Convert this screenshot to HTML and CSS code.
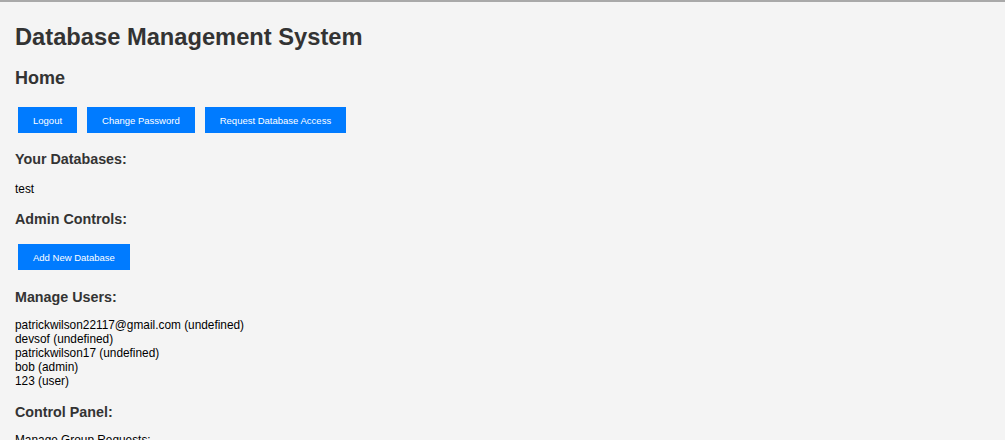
FILE: index.html
```html
<!DOCTYPE html>
<html lang="en">
<head>
<meta charset="utf-8">
<title>Database Management System</title>
<link rel="stylesheet" href="styles.css">
</head>
<body>
  <h1 class="title">Database Management System</h1>
  <h2 class="page-title">Home</h2>
  <div class="btn-row btn-row-top">
    <button class="btn">Logout</button>
    <button class="btn">Change Password</button>
    <button class="btn">Request Database Access</button>
  </div>
  <h3 class="section-title">Your Databases:</h3>
  <p class="db-list">test</p>
  <h3 class="section-title">Admin Controls:</h3>
  <div class="btn-row btn-row-admin">
    <button class="btn">Add New Database</button>
  </div>
  <h3 class="section-title">Manage Users:</h3>
  <div class="user-list">
    <div class="user">patrickwilson22117@gmail.com (undefined)</div>
    <div class="user">devsof (undefined)</div>
    <div class="user">patrickwilson17 (undefined)</div>
    <div class="user">bob (admin)</div>
    <div class="user">123 (user)</div>
  </div>
  <h3 class="section-title">Control Panel:</h3>
  <div class="panel-text">Manage Group Requests:</div>
</body>
</html>
```
FILE: styles.css
```css
html, body {
  background: #f4f4f4;
}
body {
  margin: 0;
  border-top: 2px solid #a9a9a9;
  padding: 5.5px 15px 20px;
  font-family: "Liberation Sans", Arial, sans-serif;
  font-size: 11.85px;
  line-height: 13.9px;
  color: #000;
}
.title {
  font-size: 23.7px;
  line-height: normal;
  font-weight: bold;
  color: #333;
  margin: 16px 0 17px;
}
.page-title {
  font-size: 18px;
  line-height: normal;
  font-weight: bold;
  color: #333;
  margin: 0 0 15px;
}
.section-title {
  font-size: 14.3px;
  line-height: normal;
  font-weight: bold;
  color: #333;
  margin: 14px 0;
}
.btn-row {
  display: flex;
  gap: 4px;
  margin: 0;
}
.btn-row-admin {
  margin: -1px 0 15px;
}
.btn {
  margin: 3.75px 3px;
  padding: 7.5px 15px;
  border: none;
  border-radius: 0;
  background: #007bff;
  color: #fff;
  font-family: "Liberation Sans", Arial, sans-serif;
  font-size: 9.5px;
  line-height: normal;
  cursor: pointer;
}
.db-list {
  margin: 16px 0 14.5px;
}
.user-list {
  margin: 14.5px 0 15px;
}
.panel-text {
  margin: 14px 0;
}
```
